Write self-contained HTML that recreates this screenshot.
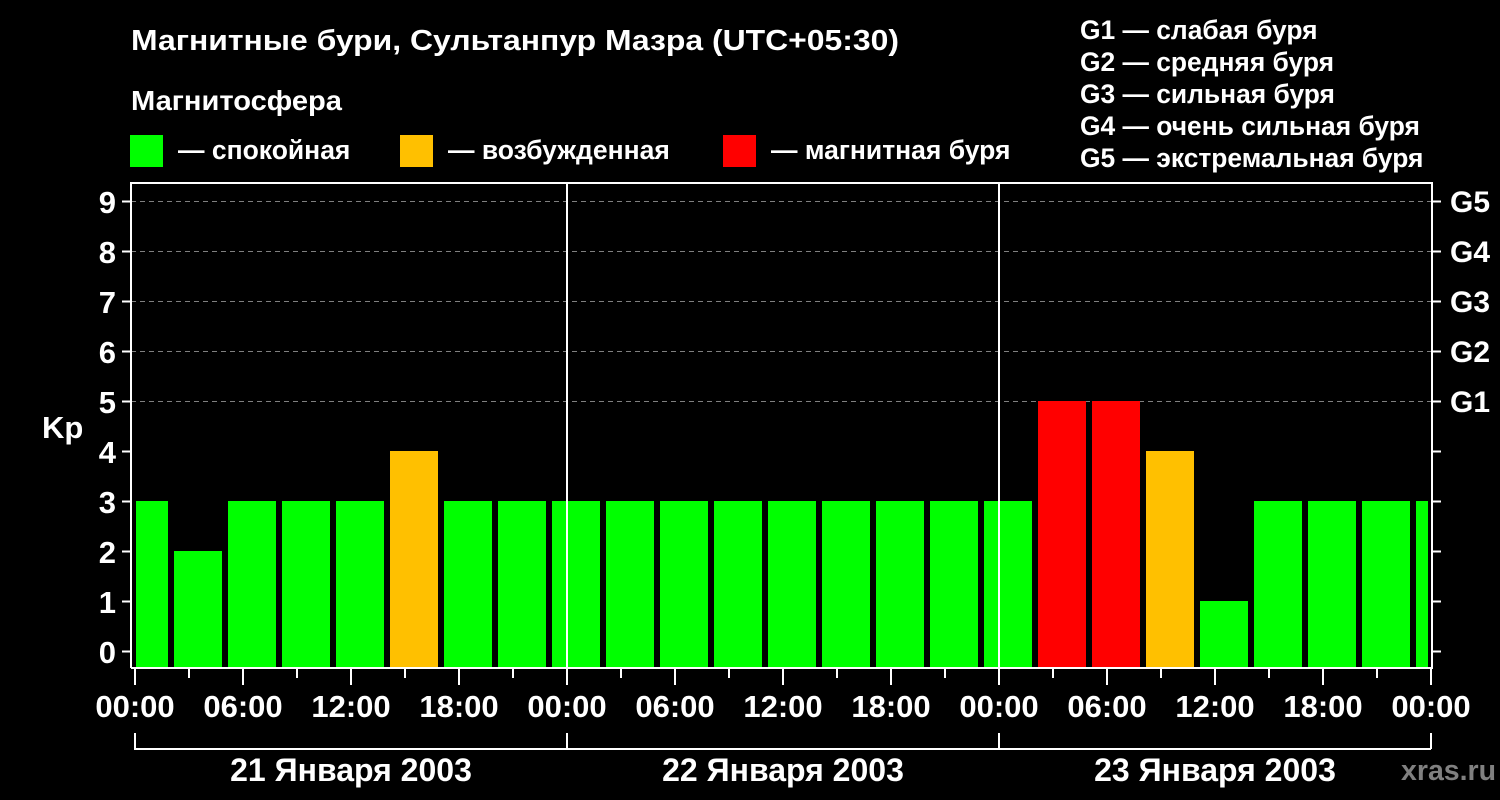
<!DOCTYPE html>
<html><head><meta charset="utf-8"><style>
html,body{margin:0;padding:0;background:#000;}
svg{display:block}
text{font-family:"Liberation Sans",Arial,sans-serif;font-weight:bold;fill:#fff}
</style></head><body>
<svg width="1500" height="800" viewBox="0 0 1500 800" xmlns="http://www.w3.org/2000/svg">
<rect width="1500" height="800" fill="#000"/>
<text x="131" y="50" font-size="29" textLength="768" lengthAdjust="spacingAndGlyphs">Магнитные бури, Сультанпур Мазра (UTC+05:30)</text>
<text x="131" y="110" font-size="28" textLength="211" lengthAdjust="spacingAndGlyphs">Магнитосфера</text>
<rect x="130" y="135" width="33" height="32" fill="#00ff00"/>
<text x="178" y="159" font-size="26.5">— спокойная</text>
<rect x="400" y="135" width="33" height="32" fill="#ffc000"/>
<text x="448" y="159" font-size="26.5">— возбужденная</text>
<rect x="723" y="135" width="33" height="32" fill="#ff0000"/>
<text x="771" y="159" font-size="26.5">— магнитная буря</text>
<g font-size="26.4">
<text x="1080" y="39">G1 — слабая буря</text>
<text x="1080" y="71">G2 — средняя буря</text>
<text x="1080" y="103">G3 — сильная буря</text>
<text x="1080" y="135">G4 — очень сильная буря</text>
<text x="1080" y="167">G5 — экстремальная буря</text>
</g>
<g stroke="#808080" stroke-width="1" stroke-dasharray="5,4">
<line x1="131" x2="1432" y1="201.5" y2="201.5"/>
<line x1="131" x2="1432" y1="251.5" y2="251.5"/>
<line x1="131" x2="1432" y1="301.5" y2="301.5"/>
<line x1="131" x2="1432" y1="351.5" y2="351.5"/>
<line x1="131" x2="1432" y1="401.5" y2="401.5"/>
</g>
<g>
<rect x="136" y="501" width="32" height="167" fill="#00ff00"/>
<rect x="174" y="551" width="48" height="117" fill="#00ff00"/>
<rect x="228" y="501" width="48" height="167" fill="#00ff00"/>
<rect x="282" y="501" width="48" height="167" fill="#00ff00"/>
<rect x="336" y="501" width="48" height="167" fill="#00ff00"/>
<rect x="390" y="451" width="48" height="217" fill="#ffc000"/>
<rect x="444" y="501" width="48" height="167" fill="#00ff00"/>
<rect x="498" y="501" width="48" height="167" fill="#00ff00"/>
<rect x="552" y="501" width="48" height="167" fill="#00ff00"/>
<rect x="606" y="501" width="48" height="167" fill="#00ff00"/>
<rect x="660" y="501" width="48" height="167" fill="#00ff00"/>
<rect x="714" y="501" width="48" height="167" fill="#00ff00"/>
<rect x="768" y="501" width="48" height="167" fill="#00ff00"/>
<rect x="822" y="501" width="48" height="167" fill="#00ff00"/>
<rect x="876" y="501" width="48" height="167" fill="#00ff00"/>
<rect x="930" y="501" width="48" height="167" fill="#00ff00"/>
<rect x="984" y="501" width="48" height="167" fill="#00ff00"/>
<rect x="1038" y="401" width="48" height="267" fill="#ff0000"/>
<rect x="1092" y="401" width="48" height="267" fill="#ff0000"/>
<rect x="1146" y="451" width="48" height="217" fill="#ffc000"/>
<rect x="1200" y="601" width="48" height="67" fill="#00ff00"/>
<rect x="1254" y="501" width="48" height="167" fill="#00ff00"/>
<rect x="1308" y="501" width="48" height="167" fill="#00ff00"/>
<rect x="1362" y="501" width="48" height="167" fill="#00ff00"/>
<rect x="1416" y="501" width="12" height="167" fill="#00ff00"/>
</g>
<g stroke="#fff" stroke-width="2" fill="none">
<path d="M131 668 V183 H1432 V668 H131"/>
<line x1="567" x2="567" y1="183" y2="668"/>
<line x1="999" x2="999" y1="183" y2="668"/>
</g>
<g stroke="#fff" stroke-width="2">
<path d="M122 201.5h9M122 251.5h9M122 301.5h9M122 351.5h9M122 401.5h9M122 451.5h9M122 501.5h9M122 551.5h9M122 601.5h9M122 651.5h9"/>
<path d="M1432 201.5h9M1432 251.5h9M1432 301.5h9M1432 351.5h9M1432 401.5h9M1432 451.5h9M1432 501.5h9M1432 551.5h9M1432 601.5h9M1432 651.5h9"/>
<path d="M135 668v17M243 668v17M351 668v17M459 668v17M567 668v17M675 668v17M783 668v17M891 668v17M999 668v17M1107 668v17M1215 668v17M1323 668v17M1431 668v17"/>
<path d="M189 668v10M297 668v10M405 668v10M513 668v10M621 668v10M729 668v10M837 668v10M945 668v10M1053 668v10M1161 668v10M1269 668v10M1377 668v10"/>
<path d="M135 733V749H1431M567 733V749M999 733V749M1431 733V749" fill="none"/>
</g>
<g font-size="31" text-anchor="end">
<text x="116" y="213">9</text><text x="116" y="263">8</text><text x="116" y="313">7</text>
<text x="116" y="363">6</text><text x="116" y="413">5</text><text x="116" y="463">4</text>
<text x="116" y="513">3</text><text x="116" y="563">2</text><text x="116" y="613">1</text>
<text x="116" y="663">0</text>
</g>
<text x="42" y="438" font-size="31">Kp</text>
<g font-size="30">
<text x="1450" y="212">G5</text><text x="1450" y="262">G4</text><text x="1450" y="312">G3</text>
<text x="1450" y="362">G2</text><text x="1450" y="412">G1</text>
</g>
<g font-size="31" text-anchor="middle">
<text x="135" y="717">00:00</text><text x="243" y="717">06:00</text><text x="351" y="717">12:00</text>
<text x="459" y="717">18:00</text><text x="567" y="717">00:00</text><text x="675" y="717">06:00</text>
<text x="783" y="717">12:00</text><text x="891" y="717">18:00</text><text x="999" y="717">00:00</text>
<text x="1107" y="717">06:00</text><text x="1215" y="717">12:00</text><text x="1323" y="717">18:00</text>
<text x="1431" y="717">00:00</text>
<text x="351" y="781" font-size="32">21 Января 2003</text>
<text x="783" y="781" font-size="32">22 Января 2003</text>
<text x="1215" y="781" font-size="32">23 Января 2003</text>
</g>
<text x="1401" y="780" font-size="28.5" style="fill:#808080">xras.ru</text>
</svg>
</body></html>
